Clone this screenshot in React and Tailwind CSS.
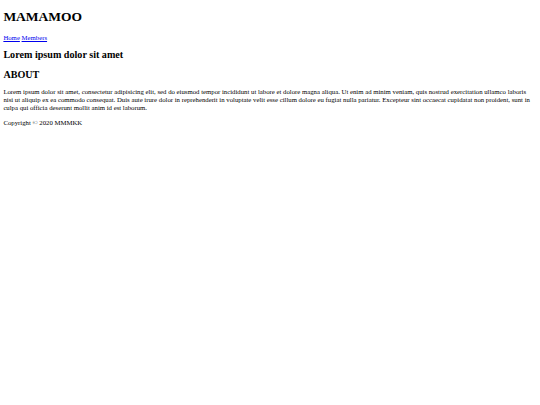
import React from "react";

const App = () => {
  return (
    <div className="min-h-[405px] bg-white px-[3.375px] font-['Liberation_Serif',serif] text-[6.75px] leading-[normal] text-black">
      {/* Header */}
      <h1 className="my-[0.67em] text-[2em] font-bold">MAMAMOO</h1>
      <nav>
        <a href="#" className="text-[#0000EE] underline">
          Home
        </a>{" "}
        <a href="#" className="text-[#0000EE] underline">
          Members
        </a>
      </nav>

      {/* Main */}
      <h2 className="my-[0.83em] text-[1.5em] font-bold">Lorem ipsum dolor sit amet</h2>
      <h2 className="my-[0.83em] text-[1.5em] font-bold">ABOUT</h2>
      <p className="mt-[1.1em] mb-[1em] leading-[8px]">
        Lorem ipsum dolor sit amet, consectetur adipisicing elit, sed do eiusmod tempor
        incididunt ut labore et dolore magna aliqua. Ut enim ad minim veniam, quis nostrud
        exercitation ullamco laboris nisi ut aliquip ex ea commodo consequat. Duis aute irure
        dolor in reprehenderit in voluptate velit esse cillum dolore eu fugiat nulla pariatur.
        Excepteur sint occaecat cupidatat non proident, sunt in culpa qui officia deserunt
        mollit anim id est laborum.
      </p>

      {/* Footer */}
      <p className="mt-[0.9em] mb-[1em]">Copyright © 2020 MMMKK</p>
    </div>
  );
};

export default App;
